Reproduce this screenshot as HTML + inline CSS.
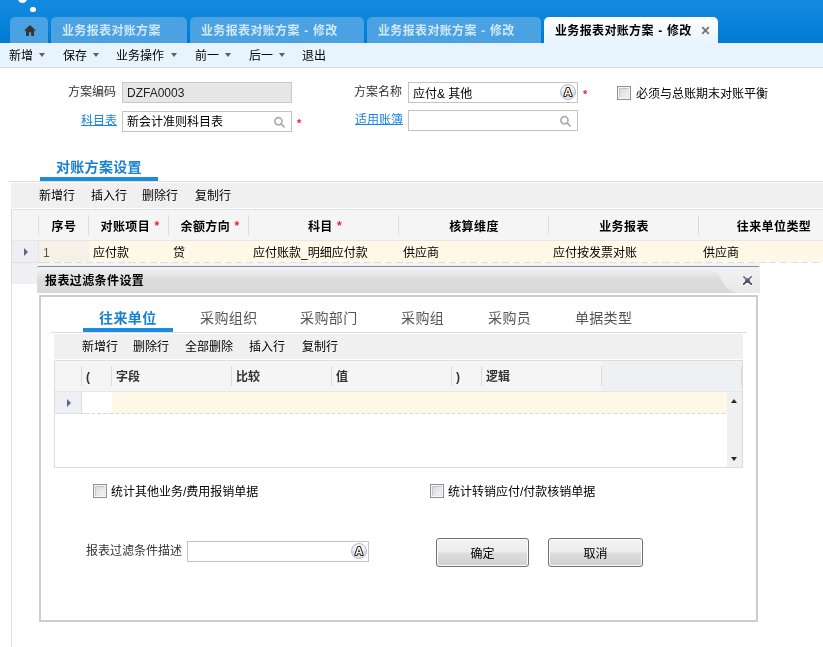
<!DOCTYPE html>
<html lang="zh-CN">
<head>
<meta charset="utf-8">
<title>业务报表对账方案 - 修改</title>
<style>
*{box-sizing:border-box;margin:0;padding:0}
html,body{width:823px;height:647px;overflow:hidden;background:#fff}
body{position:relative;font-family:"Liberation Sans","Noto Sans CJK SC",sans-serif;font-size:12px;color:#000;line-height:14px}
.abs{position:absolute}
.t{position:absolute;white-space:nowrap;height:14px;line-height:14px}
.b{font-weight:bold}
.hd{letter-spacing:0.4px;word-spacing:0.5px}
/* header */
#hdr{left:0;top:0;width:823px;height:43px;background:linear-gradient(#128adf 0%,#0a84da 50%,#007ad0 100%)}
.dot{position:absolute;background:#fff;border-radius:50%}
.tab{position:absolute;top:17px;height:26px;border-radius:5px 5px 0 0;background:#4aa2e2;color:#d2e8f8;font-weight:bold;line-height:28px;white-space:nowrap;padding-left:11px;letter-spacing:0.35px;word-spacing:0.7px}
.tab.act{background:linear-gradient(#ffffff,#e8f4fd);color:#000}
/* toolbar */
#tb{left:0;top:43px;width:823px;height:25px;background:#e8f4fd;border-bottom:1px solid #cde0f6}
.dd{position:absolute;top:53px;width:0;height:0;margin-left:-0.5px;border-left:3.6px solid transparent;border-right:3.6px solid transparent;border-top:4.2px solid #625c5a}
/* inputs */
.inp{position:absolute;height:21px;border:1px solid #c3c3c3;background:#fff}
.red{color:#f2202c}
.lnk{color:#1c85dc;text-decoration:underline;text-underline-offset:0px;text-decoration-thickness:1px}
.cb{position:absolute;width:14px;height:14px;border:1px solid #8e8f8f;background:#f6f6f6}
.cb i{position:absolute;left:1px;top:1px;width:10px;height:10px;border:1px solid;border-color:#c0c5ce #e3e5e9 #e6e8eb #c3c8d1;background:linear-gradient(135deg,#d6dae0,#f3f4f4)}
.sep{position:absolute;width:1px;background:#dcdcdc}
.btn{position:absolute;top:538px;height:29px;border:1px solid #707070;border-radius:3px;background:linear-gradient(#f3f3f3 0,#ececec 48%,#dedede 52%,#d0d0d0 100%);box-shadow:inset 0 0 0 1px #fcfcfc;text-align:center;line-height:30px}
</style>
</head>
<body>
<div id="root" style="position:absolute;left:0;top:0;width:823px;height:647px;overflow:hidden;will-change:transform">
<!-- header -->
<div id="hdr" class="abs"></div>
<div class="dot" style="left:18px;top:-6px;width:9.2px;height:9.2px"></div>
<div class="dot" style="left:30px;top:6.5px;width:5.7px;height:5.7px"></div>
<div class="tab" style="left:10px;width:38px;padding:0">
<svg class="abs" style="left:14px;top:8px" width="12" height="11" viewBox="0 0 12 11"><path d="M6 0 L0 5.8 H2 V11 H4.9 V7.2 H7.1 V11 H10 V5.8 H12 Z" fill="#3a3431"/></svg>
</div>
<div class="tab" style="left:51px;width:136px">业务报表对账方案</div>
<div class="tab" style="left:190px;width:174px">业务报表对账方案 - 修改</div>
<div class="tab" style="left:367px;width:174px">业务报表对账方案 - 修改</div>
<div class="tab act" style="left:544px;width:174px">业务报表对账方案 - 修改<svg class="abs" style="left:157px;top:9px" width="9" height="9" viewBox="0 0 9 9"><path d="M1.2 1.2 L7.8 7.8 M7.8 1.2 L1.2 7.8" stroke="#777" stroke-width="1.9"/></svg></div>

<!-- toolbar -->
<div id="tb" class="abs"></div>
<div class="t" style="left:9px;top:49px">新增</div><div class="dd" style="left:39px"></div>
<div class="t" style="left:63px;top:49px">保存</div><div class="dd" style="left:93px"></div>
<div class="t" style="left:116px;top:49px">业务操作</div><div class="dd" style="left:171px"></div>
<div class="t" style="left:195px;top:49px">前一</div><div class="dd" style="left:225px"></div>
<div class="t" style="left:249px;top:49px">后一</div><div class="dd" style="left:279px"></div>
<div class="t" style="left:302px;top:49px">退出</div>

<!-- form -->
<div class="t" style="left:68px;top:85px;color:#333">方案编码</div>
<div class="inp" style="left:122px;top:82px;width:170px;background:#e7e7e7;border-color:#c8c8c8"></div>
<div class="t" style="left:127px;top:86px;color:#222">DZFA0003</div>
<div class="t lnk" style="left:81px;top:114px">科目表</div>
<div class="inp" style="left:122px;top:111px;width:170px"></div>
<div class="t" style="left:127px;top:115px">新会计准则科目表</div>
<div class="t red b" style="left:297px;top:116px;font-size:11px">*</div>

<div class="t" style="left:354px;top:85px;color:#333">方案名称</div>
<div class="inp" style="left:408px;top:82px;width:170px"></div>
<div class="t" style="left:413px;top:87px">应付&amp; 其他</div>
<div class="t red b" style="left:583px;top:87px;font-size:11px">*</div>
<div class="t lnk" style="left:355px;top:113px">适用账簿</div>
<div class="inp" style="left:408px;top:110px;width:170px"></div>

<div class="cb" style="left:617px;top:86px"><i></i></div>
<div class="t" style="left:636px;top:87px">必须与总账期末对账平衡</div>

<!-- icons -->
<svg class="abs" style="left:272.4px;top:115.4px" width="16" height="16" viewBox="0 0 16 16"><circle cx="6.4" cy="6.3" r="3.6" fill="none" stroke="#adadad" stroke-width="1.7"/><path d="M9 8.9 L12 11.9" stroke="#adadad" stroke-width="1.8" stroke-linecap="round"/></svg><svg class="abs" style="left:558.3px;top:114.4px" width="16" height="16" viewBox="0 0 16 16"><circle cx="6.4" cy="6.3" r="3.6" fill="none" stroke="#adadad" stroke-width="1.7"/><path d="M9 8.9 L12 11.9" stroke="#adadad" stroke-width="1.8" stroke-linecap="round"/></svg><svg class="abs" style="left:559px;top:83px" width="18" height="18" viewBox="0 0 18 18"><defs><linearGradient id="ag1" x1="0" y1="0" x2="0" y2="1"><stop offset="0" stop-color="#f6f6f6"/><stop offset="0.5" stop-color="#ededed"/><stop offset="0.52" stop-color="#d8dee6"/><stop offset="1" stop-color="#e6eaef"/></linearGradient></defs><circle cx="9" cy="9" r="7.5" fill="url(#ag1)" stroke="#adbdcd" stroke-width="1"/><text x="9" y="13" text-anchor="middle" font-family="Liberation Sans,sans-serif" font-weight="bold" font-size="11" fill="#fff3e6" stroke="#222" stroke-width="2.1" paint-order="stroke" stroke-linejoin="round">A</text></svg>
<!-- section tab -->
<div class="t b" style="left:56px;top:159px;font-size:14px;height:16px;line-height:16px;color:#1680d2;letter-spacing:0.3px">对账方案设置</div>
<div class="abs" style="left:40px;top:177px;width:118px;height:4px;background:#1b8ce2"></div>
<div class="abs" style="left:8px;top:181px;width:815px;height:1px;background:#dcdcdc"></div>
<div class="sep" style="left:11px;top:209px;height:438px"></div>

<!-- main grid -->
<div class="abs" style="left:11px;top:183px;width:812px;height:25px;background:#f0f0f0"></div>
<div class="t" style="left:39px;top:189px">新增行</div>
<div class="t" style="left:91px;top:189px">插入行</div>
<div class="t" style="left:142px;top:189px">删除行</div>
<div class="t" style="left:195px;top:189px">复制行</div>
<div class="abs" style="left:12px;top:209px;width:811px;height:32px;background:#f5f5f5;border-top:1px solid #e2e2e2;border-bottom:1px solid #e6e6e6"></div>
<div class="sep" style="left:38px;top:215px;height:20px"></div>
<div class="sep" style="left:88px;top:215px;height:20px"></div>
<div class="sep" style="left:168px;top:215px;height:20px"></div>
<div class="sep" style="left:248px;top:215px;height:20px"></div>
<div class="sep" style="left:398px;top:215px;height:20px"></div>
<div class="sep" style="left:548px;top:215px;height:20px"></div>
<div class="sep" style="left:698px;top:215px;height:20px"></div>
<div class="t b hd" style="left:39px;top:220px;width:50px;text-align:center">序号</div>
<div class="t b hd" style="left:90px;top:220px;width:80px;text-align:center">对账项目 <span class="red" style="position:relative;top:-1.5px">*</span></div>
<div class="t b hd" style="left:170px;top:220px;width:80px;text-align:center">余额方向 <span class="red" style="position:relative;top:-1.5px">*</span></div>
<div class="t b hd" style="left:250px;top:220px;width:150px;text-align:center">科目 <span class="red" style="position:relative;top:-1.5px">*</span></div>
<div class="t b hd" style="left:399px;top:220px;width:150px;text-align:center">核算维度</div>
<div class="t b hd" style="left:549px;top:220px;width:150px;text-align:center">业务报表</div>
<div class="t b hd" style="left:699px;top:220px;width:150px;text-align:center">往来单位类型</div>
<!-- row -->
<div class="abs" style="left:12px;top:241px;width:26px;height:21px;background:#eeeef4"></div>
<div class="abs" style="left:39px;top:241px;width:50px;height:21px;background:#f5f1e9"></div>
<div class="abs" style="left:89px;top:241px;width:734px;height:21px;background:#fff8e6"></div>
<div class="abs" style="left:38px;top:262px;width:785px;height:1px;background:repeating-linear-gradient(90deg,#dedede 0,#dedede 7.2px,#fdfdfd 7.2px,#fdfdfd 10.68px);background-position:5.2px 0"></div>
<div class="abs" style="left:24px;top:248px;width:0;height:0;border-top:4px solid transparent;border-bottom:4px solid transparent;border-left:4px solid #62628e"></div>
<div class="t" style="left:43px;top:246px;color:#5c5448">1</div>
<div class="t" style="left:93px;top:246px">应付款</div>
<div class="t" style="left:173px;top:246px">贷</div>
<div class="t" style="left:253px;top:246px">应付账款_明细应付款</div>
<div class="t" style="left:403px;top:246px">供应商</div>
<div class="t" style="left:553px;top:246px">应付按发票对账</div>
<div class="t" style="left:703px;top:246px">供应商</div>
<div class="abs" style="left:12px;top:262px;width:26px;height:22px;background:#eff0f4;border-top:1px solid #e0e0e3"></div><div class="sep" style="left:38px;top:241px;height:21px;background:#e4e4e4"></div>
<div class="sep" style="left:38px;top:262px;height:22px"></div>

<!-- dialog -->
<div class="abs" id="dlg" style="left:37px;top:266px;width:723px;height:358px;background:#fff"></div>
<div class="abs" style="left:38px;top:263px;width:722px;height:3px;background:#f3f3f3"></div>
<div class="abs" style="left:37px;top:266px;width:723px;height:27px;background:linear-gradient(#f4f4f4 0%,#dcdcdc 48%,#d8d8d8 100%);border-top:1px solid #7f8c9e;border-radius:2px 2px 0 0"></div>
<svg class="abs" style="left:700px;top:267px" width="60" height="26" viewBox="0 0 60 26"><defs><linearGradient id="cg" x1="0" y1="0" x2="0" y2="1"><stop offset="0" stop-color="#f2f2f2"/><stop offset="1" stop-color="#e8e8e8"/></linearGradient></defs><path d="M8 0 C 23 1, 18 22, 37 26 L60 26 L60 0 Z" fill="url(#cg)"/></svg>
<div class="t b hd" style="left:45px;top:274px">报表过滤条件设置</div>
<svg class="abs" style="left:742px;top:275px" width="11" height="11" viewBox="0 0 11 11"><defs><linearGradient id="xg" x1="0" y1="0" x2="0" y2="1"><stop offset="0" stop-color="#7a8096"/><stop offset="1" stop-color="#363c50"/></linearGradient></defs><path d="M1.2 1.1 L9.8 9.7 M9.8 1.1 L1.2 9.7" stroke="#fff" stroke-opacity="0.75" stroke-width="3.6" stroke-linecap="round"/><path d="M1.2 1.1 L9.8 9.7 M9.8 1.1 L1.2 9.7" stroke="url(#xg)" stroke-width="1.7" stroke-linecap="butt"/><rect x="3.2" y="3.1" width="4.6" height="4.6" fill="url(#xg)"/></svg>
<div class="abs" style="left:39px;top:295px;width:719px;height:327px;border:2px solid #cccdd0;background:#fff"></div>

<!-- dialog tabs -->
<div class="t b" style="left:99px;top:310px;font-size:14px;height:16px;line-height:16px;color:#1680d2;letter-spacing:0.4px">往来单位</div>
<div class="abs" style="left:83px;top:328px;width:90px;height:4px;background:#1b8ce2"></div>
<div class="t" style="left:200px;top:310px;font-size:14px;height:16px;line-height:16px;color:#555;letter-spacing:0.4px">采购组织</div>
<div class="t" style="left:300px;top:310px;font-size:14px;height:16px;line-height:16px;color:#555;letter-spacing:0.4px">采购部门</div>
<div class="t" style="left:401px;top:310px;font-size:14px;height:16px;line-height:16px;color:#555;letter-spacing:0.4px">采购组</div>
<div class="t" style="left:488px;top:310px;font-size:14px;height:16px;line-height:16px;color:#555;letter-spacing:0.4px">采购员</div>
<div class="t" style="left:575px;top:310px;font-size:14px;height:16px;line-height:16px;color:#555;letter-spacing:0.3px">单据类型</div>
<div class="abs" style="left:51px;top:332px;width:695px;height:1px;background:#dcdcdc"></div>
<div class="abs" style="left:54px;top:334px;width:689px;height:25px;background:#f0f0f0"></div>
<div class="t" style="left:82px;top:340px">新增行</div>
<div class="t" style="left:133px;top:340px">删除行</div>
<div class="t" style="left:185px;top:340px">全部删除</div>
<div class="t" style="left:249px;top:340px">插入行</div>
<div class="t" style="left:302px;top:340px">复制行</div>

<!-- inner grid -->
<div class="abs" style="left:54px;top:360px;width:689px;height:108px;border:1px solid #dddddd;background:#fff"></div>
<div class="abs" style="left:55px;top:361px;width:687px;height:31px;background:#f5f5f5;border-bottom:1px solid #e6e6e6"></div>
<div class="abs" style="left:602px;top:361px;width:140px;height:30px;background:#eef0f3"></div>
<div class="sep" style="left:81px;top:366px;height:20px"></div>
<div class="sep" style="left:111px;top:366px;height:20px"></div>
<div class="sep" style="left:231px;top:366px;height:20px"></div>
<div class="sep" style="left:331px;top:366px;height:20px"></div>
<div class="sep" style="left:451px;top:366px;height:20px"></div>
<div class="sep" style="left:481px;top:366px;height:20px"></div>
<div class="sep" style="left:601px;top:366px;height:20px"></div>
<div class="sep" style="left:741px;top:366px;height:20px"></div>
<div class="t b" style="left:86px;top:370px;color:#333">(</div>
<div class="t b" style="left:116px;top:370px;color:#333">字段</div>
<div class="t b" style="left:236px;top:370px;color:#333">比较</div>
<div class="t b" style="left:336px;top:370px;color:#333">值</div>
<div class="t b" style="left:456px;top:370px;color:#333">)</div>
<div class="t b" style="left:486px;top:370px;color:#333">逻辑</div>
<div class="abs" style="left:55px;top:392px;width:26px;height:21px;background:#eef0f5"></div>
<div class="abs" style="left:112px;top:392px;width:615px;height:21px;background:#fff8e6"></div>
<div class="abs" style="left:81px;top:413px;width:646px;height:1px;background:repeating-linear-gradient(90deg,#d9d9d9 0,#d9d9d9 4.3px,#fdfdfd 4.3px,#fdfdfd 6px);background-position:4.2px 0"></div><div class="abs" style="left:55px;top:413px;width:27px;height:1px;background:#dedede"></div><div class="sep" style="left:81px;top:392px;height:21px;background:#dedede"></div>
<div class="abs" style="left:67px;top:399px;width:0;height:0;border-top:4px solid transparent;border-bottom:4px solid transparent;border-left:4px solid #62628e"></div>
<div class="abs" style="left:727px;top:392px;width:15px;height:75px;background:#f0f0f0"></div>
<div class="abs" style="left:731px;top:399px;width:0;height:0;border-left:3.5px solid transparent;border-right:3.5px solid transparent;border-bottom:4px solid #2a2a2a"></div>
<div class="abs" style="left:731px;top:457px;width:0;height:0;border-left:3.5px solid transparent;border-right:3.5px solid transparent;border-top:4px solid #2a2a2a"></div>

<!-- bottom -->
<div class="cb" style="left:93px;top:484px"><i></i></div>
<div class="t" style="left:111px;top:485px">统计其他业务/费用报销单据</div>
<div class="cb" style="left:430px;top:484px"><i></i></div>
<div class="t" style="left:448px;top:485px">统计转销应付/付款核销单据</div>
<div class="t" style="left:86px;top:544px;color:#333">报表过滤条件描述</div>
<div class="inp" style="left:187px;top:541px;width:182px"></div>
<svg class="abs" style="left:350px;top:542px" width="18" height="18" viewBox="0 0 18 18"><defs><linearGradient id="ag2" x1="0" y1="0" x2="0" y2="1"><stop offset="0" stop-color="#f6f6f6"/><stop offset="0.5" stop-color="#ededed"/><stop offset="0.52" stop-color="#d8dee6"/><stop offset="1" stop-color="#e6eaef"/></linearGradient></defs><circle cx="9" cy="9" r="7.5" fill="url(#ag2)" stroke="#adbdcd" stroke-width="1"/><text x="9" y="13" text-anchor="middle" font-family="Liberation Sans,sans-serif" font-weight="bold" font-size="11" fill="#fff3e6" stroke="#222" stroke-width="2.1" paint-order="stroke" stroke-linejoin="round">A</text></svg>
<div class="btn" style="left:436px;width:93px">确定</div>
<div class="btn" style="left:548px;width:95px">取消</div>
</div>
</body>
</html>
